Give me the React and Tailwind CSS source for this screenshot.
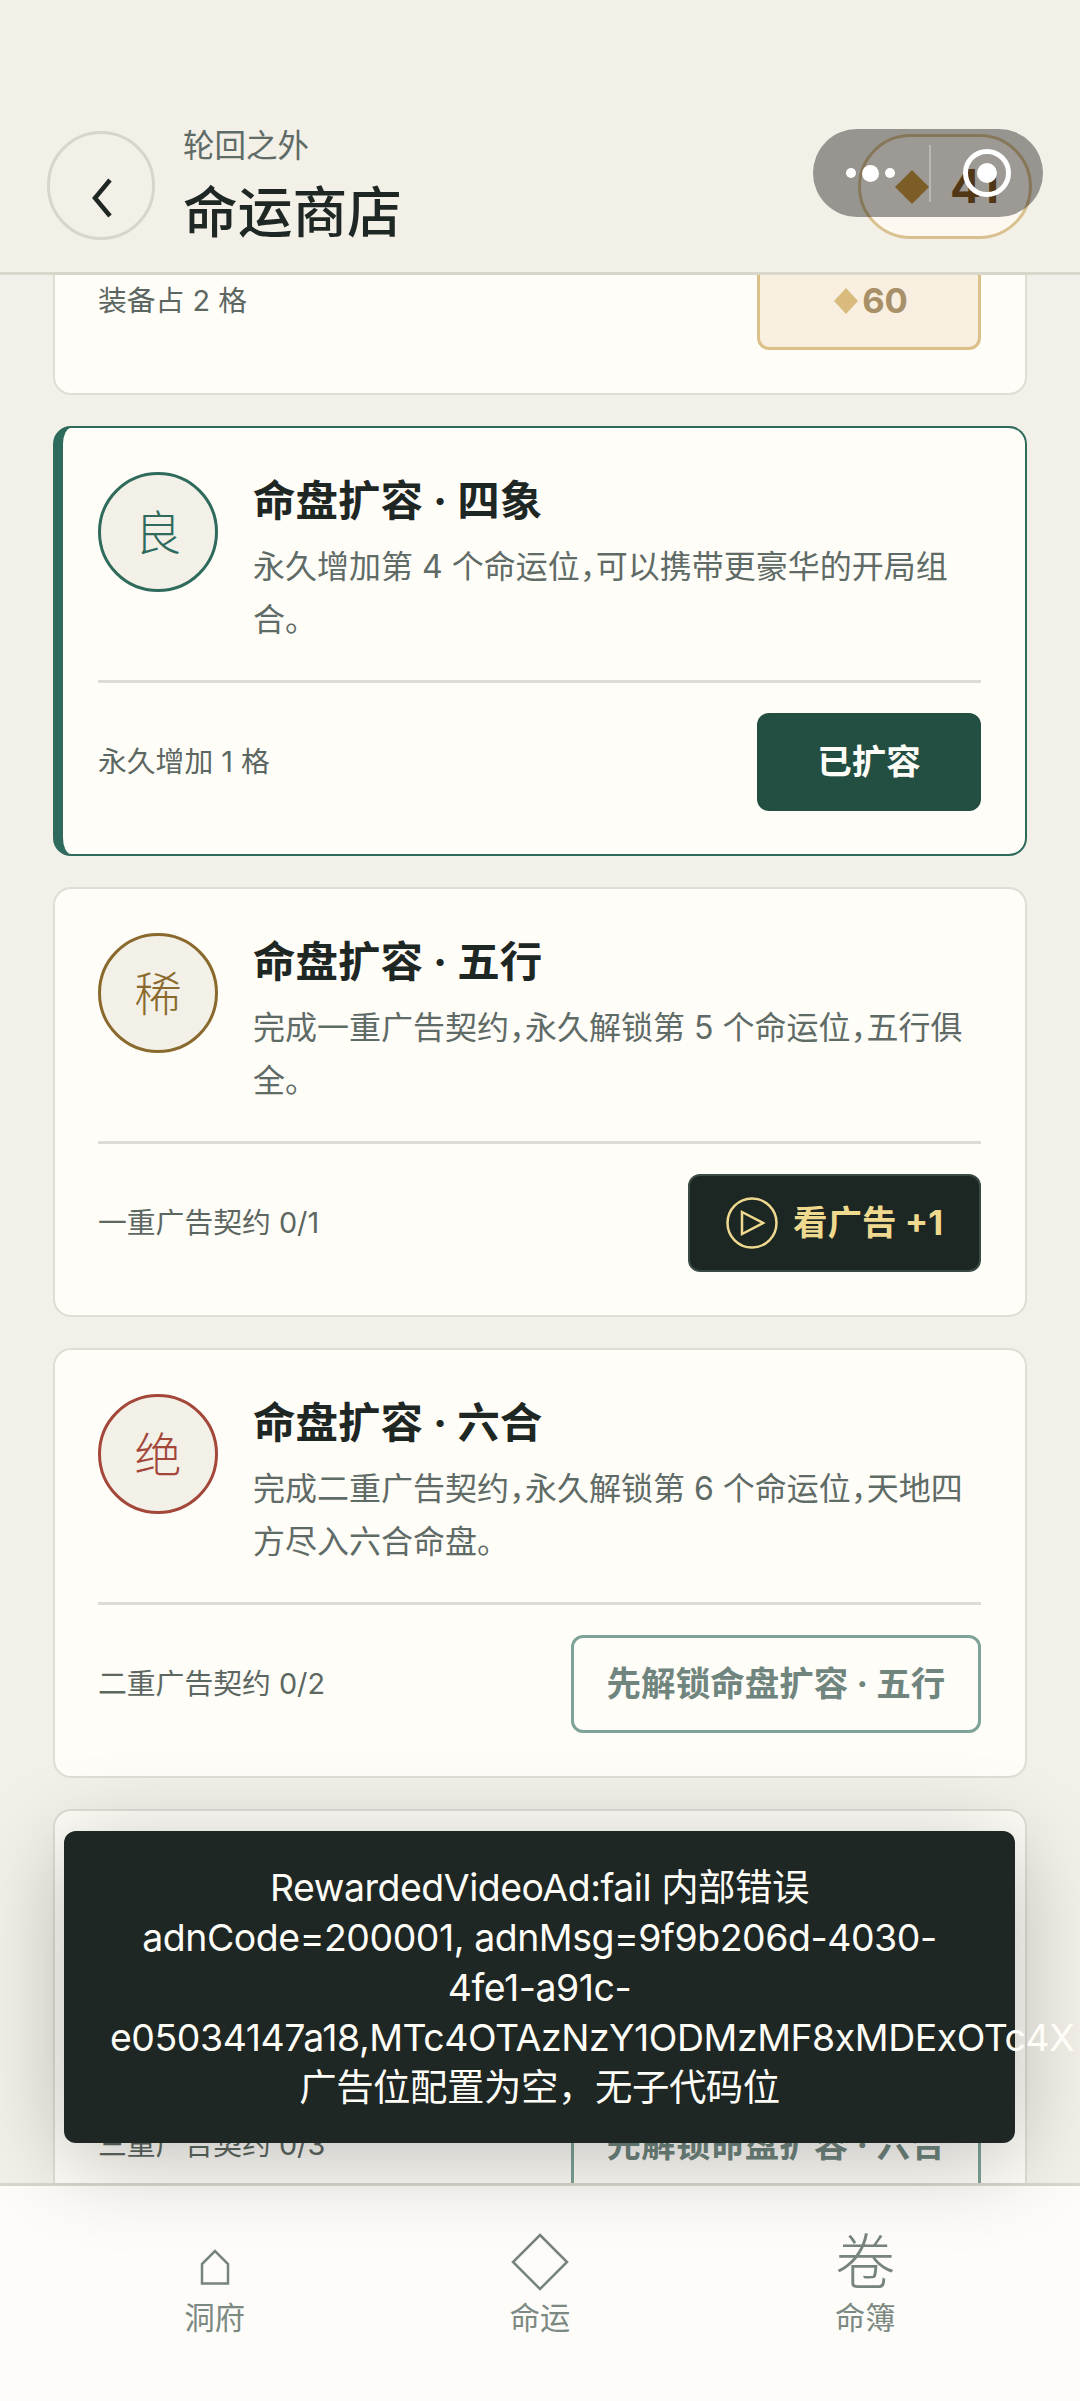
import React from 'react';

const Card = ({ active, grade, gradeClass, title, desc, label, children, bare, spacer }) => (
  <div
    className={`rounded-[18px] border-2 bg-[#fffdf8] pr-[44px] pb-[43px] ${
      active ? 'border-[#2f6b5c] border-l-[10px] pl-[35px]' : 'border-[#dfddd4] pl-[43px]'
    } ${bare ? 'pt-0' : 'pt-[44px]'}`}
  >
    {spacer ? <div className="h-[241px]" /> : null}
    {!bare && !spacer ? (
      <div className="flex gap-[35px] border-b-[3px] border-[#dedcd5] pb-[34px]">
        <div
          className={`flex h-[120px] w-[120px] shrink-0 items-center justify-center rounded-full border-[3px] bg-[#f3f0e8] pt-[3px] text-[47px] font-light ${gradeClass}`}
        >
          {grade}
        </div>
        <div className="min-w-0 flex-1">
          <h3 className="text-[42.5px] leading-[58px] font-bold text-[#1e2723]">{title}</h3>
          <p className="mt-[10px] text-[32px] leading-[53px] text-[#5f6b66] [font-feature-settings:'halt']">{desc}</p>
        </div>
      </div>
    ) : null}
    <div className={`flex items-center justify-between ${bare || spacer ? '' : 'pt-[30px]'}`}>
      <span className="text-[28.8px] text-[#5c6762]">{label}</span>
      {children}
    </div>
  </div>
);

const TabItem = ({ icon, label }) => (
  <div className="flex flex-col items-center pt-[47px]">
    <div className="flex h-[58px] w-[58px] items-center justify-center text-[#77837d]">{icon}</div>
    <span className="mt-[7px] text-[30.24px] leading-[40px] text-[#7c8882]">{label}</span>
  </div>
);

export default function App() {
  return (
    <div className="relative flex h-[2401px] w-[1080px] flex-col overflow-hidden bg-[#f2f0e8] font-['Inter','Noto_Sans_CJK_SC',sans-serif]">
      {/* 顶部 */}
      <header className="relative z-10 flex h-[275px] shrink-0 items-end justify-between border-b-[3px] border-[#d9d6cb] bg-[#f3f0e8] pr-[48px] pb-[27px] pl-[47px]">
        <div className="flex items-center gap-[28px]">
          <div className="flex h-[109px] w-[108px] items-center justify-center rounded-full border-[3px] border-[#d8d6cc]">
            <svg className="mt-[24px]" width="28" height="40" viewBox="0 0 28 40" fill="none">
              <path d="M23 2 L8 20 L23 38" stroke="#1e2723" strokeWidth="4.5" />
            </svg>
          </div>
          <div>
            <div className="text-[31.5px] leading-[40px] text-[#5f6b66]">轮回之外</div>
            <div className="mt-[13px] text-[54.7px] leading-[66px] font-medium text-[#1e2723]">命运商店</div>
          </div>
        </div>
        <div className="mb-[6px] flex h-[105px] w-[174px] items-center gap-[21px] rounded-full border-[3px] border-[#d9c08f] bg-[#fdf9f0] pl-[34px]">
          <svg width="34" height="34" viewBox="0 0 34 34">
            <path d="M17 0 L34 17 L17 34 L0 17 Z" fill="#c8963f" />
          </svg>
          <span className="text-[46px] font-bold text-[#835a24]">41</span>
        </div>
      </header>

      {/* 小程序胶囊 */}
      <div className="absolute top-[129px] left-[813px] z-20 flex h-[88px] w-[230px] items-center rounded-full bg-[rgba(0,0,0,0.38)]">
        <div className="flex w-[116px] items-center justify-end gap-[6px] pr-[34px]">
          <span className="h-[10px] w-[10px] rounded-full bg-white" />
          <span className="h-[17px] w-[17px] rounded-full bg-white" />
          <span className="h-[10px] w-[10px] rounded-full bg-white" />
        </div>
        <div className="h-[57px] w-[2px] bg-white/30" />
        <div className="flex flex-1 items-center justify-center pr-[1px]">
          <div className="flex h-[48px] w-[48px] items-center justify-center rounded-full border-[5px] border-white">
            <span className="h-[20px] w-[20px] rounded-full bg-white" />
          </div>
        </div>
      </div>

      {/* 列表 */}
      <main className="flex-1 overflow-hidden px-[53px]">
        <div className="-mt-[25px] flex flex-col gap-[31px]">
          <Card bare label="装备占 2 格">
            <button className="flex h-[98px] w-[224px] items-center justify-center gap-[4px] rounded-[12px] border-[3px] border-[#dcc08a] bg-[#f8efe0] pl-[4px] text-[34.56px] font-bold text-[#a89068]">
              <svg width="24" height="26" viewBox="0 0 24 26">
                <path d="M12 0 L24 13 L12 26 L0 13 Z" fill="#d9bb7d" />
              </svg>
              60
            </button>
          </Card>

          <Card
            active
            grade="良"
            gradeClass="border-[#2f6b5c] text-[#2f6b5c]"
            title="命盘扩容 · 四象"
            desc="永久增加第 4 个命运位，可以携带更豪华的开局组合。"
            label="永久增加 1 格"
          >
            <button className="flex h-[98px] w-[224px] items-center justify-center rounded-[12px] bg-[#234e42] text-[34.56px] font-bold text-[#fffdf8]">
              已扩容
            </button>
          </Card>

          <Card
            grade="稀"
            gradeClass="border-[#8a6a2c] text-[#8a6a2c]"
            title="命盘扩容 · 五行"
            desc="完成一重广告契约，永久解锁第 5 个命运位，五行俱全。"
            label="一重广告契约 0/1"
          >
            <button className="flex h-[98px] w-[293px] items-center justify-center gap-[15px] rounded-[12px] border-2 border-[#3a4a44] bg-[#1c2723] text-[34.56px] font-bold text-[#efd98f]">
              <svg width="52" height="52" viewBox="0 0 52 52" fill="none" stroke="#efd98f" strokeWidth="2.5">
                <circle cx="26" cy="26" r="24.5" />
                <path d="M16 15 L37 26 L16 37 Z" />
              </svg>
              看广告 +1
            </button>
          </Card>

          <Card
            grade="绝"
            gradeClass="border-[#a4473b] text-[#a4473b]"
            title="命盘扩容 · 六合"
            desc="完成二重广告契约，永久解锁第 6 个命运位，天地四方尽入六合命盘。"
            label="二重广告契约 0/2"
          >
            <button className="flex h-[98px] w-[410px] items-center justify-center rounded-[12px] border-[3px] border-[#7ea398] text-[34.56px] font-bold text-[#6f857e]">
              先解锁命盘扩容 · 五行
            </button>
          </Card>

          <Card spacer label="三重广告契约 0/3">
            <button className="flex h-[98px] w-[410px] items-center justify-center rounded-[12px] border-[3px] border-[#7ea398] text-[34.56px] font-bold text-[#6f857e]">
              先解锁命盘扩容 · 六合
            </button>
          </Card>
        </div>
      </main>

      {/* 底部导航 */}
      <nav className="relative z-10 grid h-[218px] shrink-0 grid-cols-3 border-t-[3px] border-[#d9d6cb] bg-[#fdfcf8] px-[52px]">
        <TabItem
          label="洞府"
          icon={
            <svg width="58" height="58" viewBox="0 0 58 58" fill="none" stroke="currentColor" strokeWidth="2.5">
              <path d="M16 50.5 V31 L29 18 L42 31 V50.5 Z" />
            </svg>
          }
        />
        <TabItem
          label="命运"
          icon={
            <svg width="58" height="58" viewBox="0 0 58 58" fill="none" stroke="currentColor" strokeWidth="2.5">
              <path d="M29 2 L56 29 L29 56 L2 29 Z" />
            </svg>
          }
        />
        <TabItem label="命簿" icon={<span className="text-[60px] leading-[58px] font-light">卷</span>} />
      </nav>

      {/* 错误提示 */}
      <div className="absolute top-[1831px] left-[64px] z-30 h-[312px] w-[951px] rounded-[12px] bg-[#1e2723] px-[46px] pt-[32px] text-center text-[37.44px] leading-[50px] font-normal tracking-[-0.45px] text-[#fffdf8] shadow-[0_16px_90px_rgba(0,0,0,0.25)]">
        RewardedVideoAd:fail 内部错误
        <br />
        adnCode=200001, adnMsg=9f9b206d-4030-4fe1-a91c-e05034147a18,MTc4OTAzNzY1ODMzMF8xMDExOTc4X
        <br />
        广告位配置为空，无子代码位
      </div>
    </div>
  );
}
